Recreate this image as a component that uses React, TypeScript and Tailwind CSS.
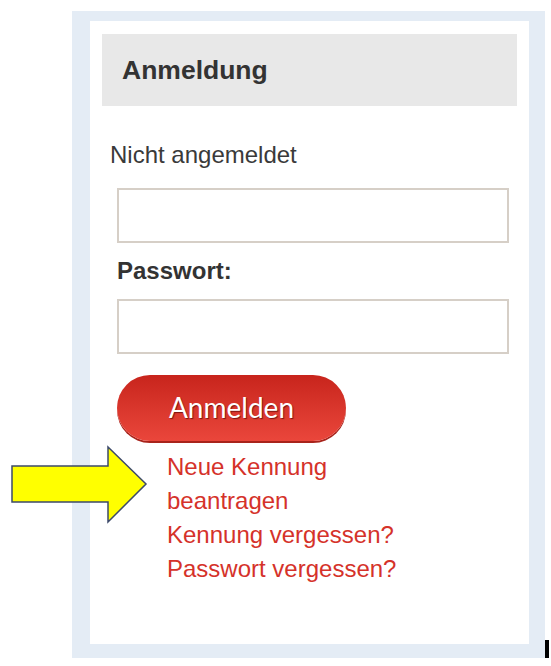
export default function App() {
  return (
    <div className="relative h-[666px] w-[551px] overflow-hidden bg-white font-['Liberation_Sans',Arial,sans-serif]">
      {/* outer framed panel */}
      <div className="ml-[72px] mt-[11px] flex h-[647px] w-[473px] flex-col bg-[#e4ecf5] pb-[14px] pl-[18px] pr-[16px] pt-[10px]">
        <div className="flex-1 bg-white px-[12px] pt-[13px]">
          <div className="flex h-[72px] items-center bg-[#e8e8e8] px-[20px]">
            <h2 className="text-[26.5px] font-bold leading-[30px] text-[#333333]">Anmeldung</h2>
          </div>

          <p className="ml-[8px] mt-[35px] text-[24px] leading-[28px] text-[#3a3a3a]">Nicht angemeldet</p>

          <div className="ml-[15px] mr-[8px]">
            <input
              type="text"
              className="mt-[19px] block h-[55px] w-full border-2 border-[#d6cfc7] bg-white outline-none"
            />
            <label className="mt-[14px] block text-[24px] font-bold leading-[28px] text-[#333333]">Passwort:</label>
            <input
              type="password"
              className="mt-[14px] block h-[55px] w-full border-2 border-[#d6cfc7] bg-white outline-none"
            />
            <button className="mt-[21px] flex h-[66px] w-[229px] items-center justify-center rounded-full bg-gradient-to-b from-[#c8241c] to-[#ea463b] pb-[2px] font-['Lato',sans-serif] text-[28px] text-white shadow-[0_2px_0_#a8231b] [text-shadow:1px_1px_1px_#7a1410]">
              Anmelden
            </button>
          </div>

          <div className="ml-[65px] mt-[9px] flex w-[250px] flex-col text-[24px] leading-[34px] text-[#d5322a]">
            <a href="#">Neue Kennung beantragen</a>
            <a href="#">Kennung vergessen?</a>
            <a href="#">Passwort vergessen?</a>
          </div>
        </div>
      </div>

      {/* yellow pointer arrow overlay */}
      <svg className="absolute left-0 top-[440px]" width="160" height="90" viewBox="0 440 160 90">
        <polygon
          points="12,466 108,466 108,447 146,484 108,522 108,502 12,502"
          fill="#ffff00"
          stroke="#3d4a6a"
          strokeWidth="1.5"
          strokeLinejoin="miter"
        />
      </svg>

      <div className="absolute left-[545px] top-[640px] h-[18px] w-[4px] bg-black" />
    </div>
  )
}
